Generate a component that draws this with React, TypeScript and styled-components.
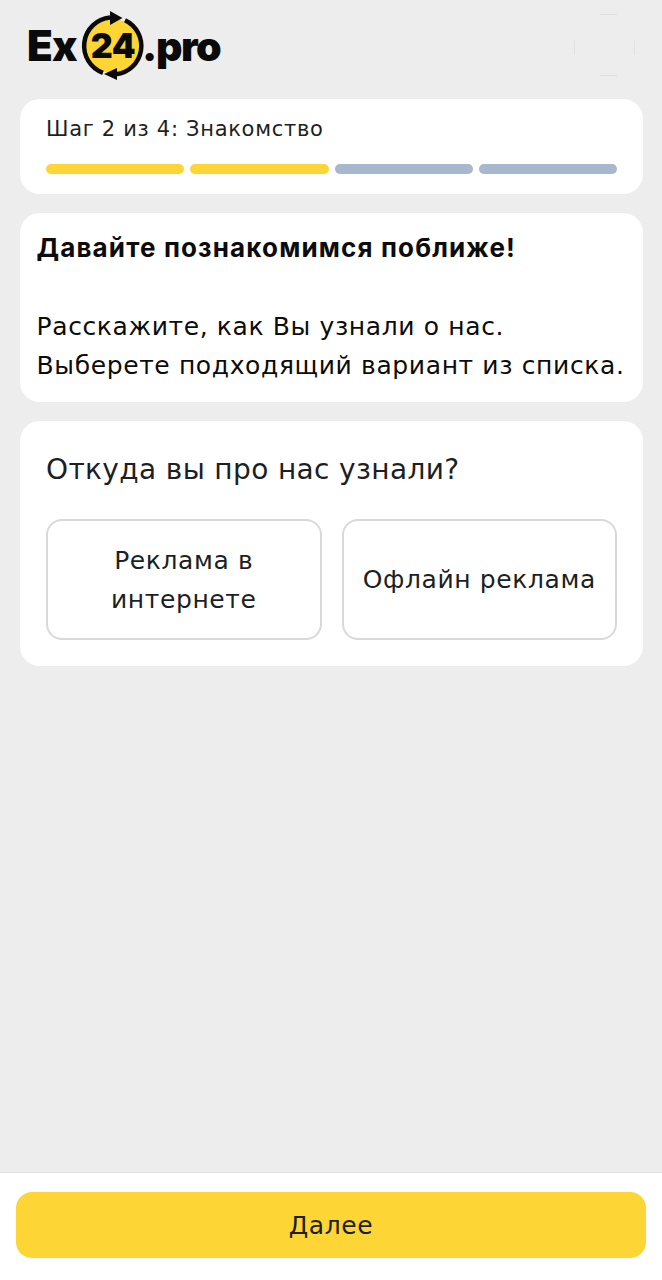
import React from 'react';
import styled, { createGlobalStyle } from 'styled-components';

const GlobalStyle = createGlobalStyle`
  html, body {
    margin: 0;
    padding: 0;
    background: #ededed;
  }
  * {
    box-sizing: border-box;
  }
`;

const steps = [true, true, false, false];
const answers = ['Реклама в интернете', 'Офлайн реклама'];

// viewBox uses page coordinates so the logo is easier to compare with the picture
const Logo = () => (
  <svg width="200" height="74" viewBox="28 9 200 74">
    <text x="27" y="60.500" fontFamily="Inter, sans-serif" fontWeight="900" fontSize="42" letterSpacing="-0.8" fill="#0a0a0a">
      Ex
    </text>
    <circle cx="112.800" cy="46" r="27" fill="#fdd535" />
    <path d="M103 72.800 A28.500 28.500 0 0 1 110 17.600" fill="none" stroke="#0a0a0a" strokeWidth="4.500" />
    <path d="M125 20.200 A28.500 28.500 0 0 1 116 74.300" fill="none" stroke="#0a0a0a" strokeWidth="4.500" />
    <path d="M110 11 L122.500 18 L110 25 Z" fill="#0a0a0a" />
    <path d="M117 68 L104 74 L117 80 Z" fill="#0a0a0a" />
    <text x="113" y="57.500" textAnchor="middle" fontFamily="Inter, sans-serif" fontWeight="900" fontSize="34" letterSpacing="-0.5" fill="#0a0a0a">
      24
    </text>
    <text x="142" y="60.500" fontFamily="Inter, sans-serif" fontWeight="900" fontSize="41" letterSpacing="-1.4" fill="#0a0a0a">
      .pro
    </text>
  </svg>
);

const FaintRing = () => (
  <svg width="64" height="68" viewBox="0 0 64 68">
    <path d="M28 5.500 H45 M28 66.500 H45" stroke="#dedede" strokeWidth="1" />
    <path d="M2.500 31 V46 M62.500 31 V46" stroke="#e2e2e2" strokeWidth="1" />
  </svg>
);

export default function App() {
  return (
    <Page>
      <GlobalStyle />
      <Header>
        <Logo />
        <FaintRing />
      </Header>
      <Content>
        <StepCard>
          <StepTitle>Шаг 2 из 4: Знакомство</StepTitle>
          <Progress>
            {steps.map((done, i) => (
              <ProgressBar key={i} $done={done} />
            ))}
          </Progress>
        </StepCard>
        <IntroCard>
          <IntroTitle>Давайте познакомимся поближе!</IntroTitle>
          <IntroText>
            Расскажите, как Вы узнали о нас.
            <br />
            Выберете подходящий вариант из списка.
          </IntroText>
        </IntroCard>
        <QuestionCard>
          <Question>Откуда вы про нас узнали?</Question>
          <Answers>
            {answers.map((answer) => (
              <Answer key={answer}>{answer}</Answer>
            ))}
          </Answers>
        </QuestionCard>
      </Content>
      <Footer>
        <NextButton>Далее</NextButton>
      </Footer>
    </Page>
  );
}

const Page = styled.div`
  width: 662px;
  height: 1280px;
  display: flex;
  flex-direction: column;
  background: #ededed;
  font-family: 'DejaVu Sans', sans-serif;
  color: #1c1f24;
  overflow: hidden;
`;

const Header = styled.header`
  height: 99px;
  flex-shrink: 0;
  display: flex;
  justify-content: space-between;
  align-items: flex-start;
  padding: 9px 26px 0 28px;
`;

const Content = styled.main`
  flex: 1;
  display: flex;
  flex-direction: column;
  gap: 19.5px;
  padding: 0 19px 0 19.5px;
`;

const Card = styled.section`
  background: #fff;
  border-radius: 20px;
`;

const StepCard = styled(Card)`
  height: 94.5px;
  padding: 16px 26px 0 26.5px;
`;

const StepTitle = styled.div`
  font-size: 21px;
  line-height: 28px;
  letter-spacing: 0.7px;
`;

const Progress = styled.div`
  display: flex;
  gap: 6px;
  margin-top: 21px;
`;

const ProgressBar = styled.div<{ $done: boolean }>`
  flex: 1;
  height: 10px;
  border-radius: 5px;
  background: ${(p) => (p.$done ? '#fdd535' : '#a7b7cd')};
`;

const IntroCard = styled(Card)`
  height: 188.5px;
  padding: 15px 16px 0 17px;
  color: #0c0c0c;
`;

const IntroTitle = styled.div`
  font-family: Inter, sans-serif;
  font-size: 26px;
  line-height: 39px;
  font-weight: 700;
  letter-spacing: 1.15px;
`;

const IntroText = styled.div`
  margin-top: 40px;
  font-size: 25px;
  line-height: 39px;
  letter-spacing: 0.62px;
  white-space: nowrap;
`;

const QuestionCard = styled(Card)`
  height: 245px;
  padding: 29px 26px 0 26.5px;
`;

const Question = styled.div`
  font-size: 28px;
  line-height: 40px;
  letter-spacing: 0.36px;
`;

const Answers = styled.div`
  display: grid;
  grid-template-columns: 1fr 1fr;
  gap: 20px;
  margin-top: 29px;
`;

const Answer = styled.div`
  height: 121px;
  display: flex;
  align-items: center;
  justify-content: center;
  padding: 0 10px;
  border: 2px solid #d9d9d9;
  border-radius: 16px;
  font-size: 25px;
  line-height: 39px;
  letter-spacing: 0.6px;
  text-align: center;
`;

const Footer = styled.footer`
  height: 108px;
  flex-shrink: 0;
  padding: 19px 16px 0;
  background: #fff;
  border-top: 1px solid #e2e2e2;
`;

const NextButton = styled.button`
  display: block;
  width: 100%;
  height: 66px;
  border: 0;
  border-radius: 16px;
  background: #fdd535;
  font-family: inherit;
  font-size: 25px;
  letter-spacing: 0.6px;
  color: #1c1f24;
`;
